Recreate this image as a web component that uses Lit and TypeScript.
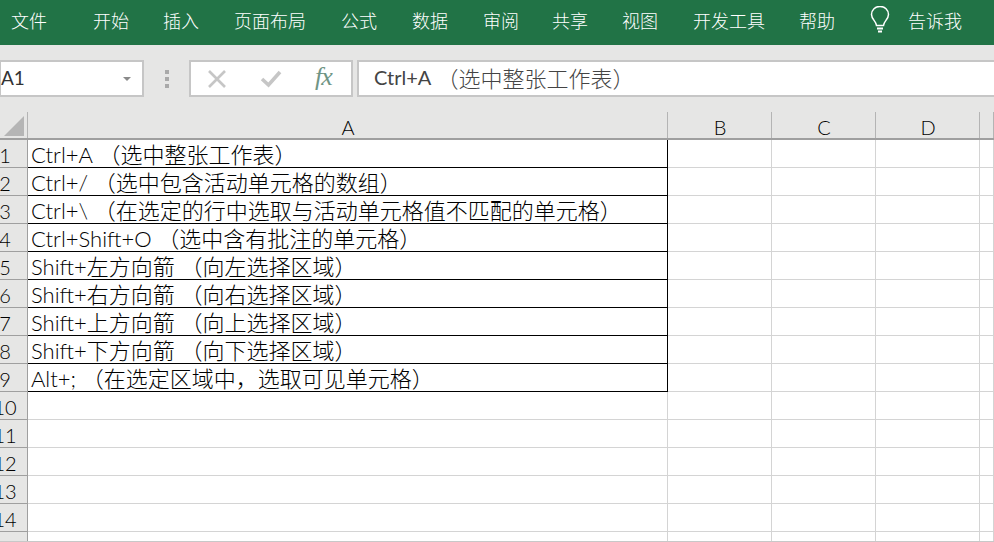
import { LitElement, html, css, svg } from "lit";
import { customElement } from "lit/decorators.js";

const MENU = ["开始", "插入", "页面布局", "公式", "数据", "审阅", "共享", "视图", "开发工具", "帮助"];
const ROWS: [string, string][] = [
  ["Ctrl+A", "（选中整张工作表）"],
  ["Ctrl+/", "（选中包含活动单元格的数组）"],
  ["Ctrl+\\", "（在选定的行中选取与活动单元格值不匹配的单元格）"],
  ["Ctrl+Shift+O", "（选中含有批注的单元格）"],
  ["Shift+左方向箭", "（向左选择区域）"],
  ["Shift+右方向箭", "（向右选择区域）"],
  ["Shift+上方向箭", "（向上选择区域）"],
  ["Shift+下方向箭", "（向下选择区域）"],
  ["Alt+;", "（在选定区域中，选取可见单元格）"],
];

@customElement("app-root")
export class AppRoot extends LitElement {
  static styles = css`
    :host {
      display: flex;
      flex-direction: column;
      width: 994px;
      height: 542px;
      overflow: hidden;
      background: #fff;
      font-family: "Lato", "Noto Sans CJK SC", sans-serif;
      text-spacing-trim: space-all;
    }
    .ribbon {
      flex: none;
      height: 45px;
      background: #217346;
      color: #fff;
      display: flex;
      align-items: center;
      font-size: 18px;
      padding-left: 11px;
      padding-bottom: 5px;
      box-sizing: border-box;
      font-family: "Noto Sans CJK SC", sans-serif;
      font-weight: 300;
    }
    .file { margin-right: 46px; }
    .menu { display: flex; gap: 35px; }
    .menu span:nth-child(1) { margin-right: -1px; }
    .menu span:nth-child(6) { margin-right: -2px; }
    .menu span:nth-child(7), .menu span:nth-child(9) { margin-right: -1px; }
    .bulb { margin-left: 35px; margin-right: 18px; display: block; }

    .fbar {
      flex: none;
      height: 67px;
      background: #e6e6e5;
      display: flex;
      align-items: flex-start;
      padding-top: 15px;
      box-sizing: border-box;
    }
    .box {
      height: 37px;
      box-sizing: border-box;
      background: #fff;
      border: 2px solid #c6c6c6;
      display: flex;
      align-items: center;
    }
    .name {
      width: 145px;
      margin-left: -1px;
      padding: 0 11px 0 0;
      justify-content: space-between;
      font-size: 19px;
      color: #333;
    }
    .name span { margin-bottom: 2px; }
    .caret {
      width: 0;
      height: 0;
      border-left: 4px solid transparent;
      border-right: 4px solid transparent;
      border-top: 4px solid #8a8a8a;
    }
    .dots {
      width: 45px;
      display: flex;
      flex-direction: column;
      align-items: center;
      gap: 3px;
      padding-top: 10px;
      box-sizing: border-box;
      height: 37px;
    }
    .dots i { width: 4px; height: 4px; background: #a9a9a9; display: block; }
    .fx { width: 164px; }
    .fx svg { display: block; }
    .x { margin-left: 16px; }
    .check { margin-left: 33px; }
    .fxt {
      margin-left: 33px;
      font-family: "Liberation Serif", serif;
      font-style: italic;
      font-size: 26px;
      color: #6f9585;
      letter-spacing: -1px;
      line-height: 1;
      margin-top: -3px;
    }
    .formula {
      flex: 1;
      margin-left: 4px;
      border-right: 0;
      padding-left: 15px;
      padding-bottom: 4px;
      font-size: 22px;
      color: #444;
      white-space: nowrap;
    }
    .formula .lat { font-size: 20px; margin-right: 5px; font-weight: 400; }
    .cell .lat { font-size: 22px; }
    .lat, .cjk { font-weight: 300; }

    .sheet {
      flex: 1;
      display: grid;
      grid-template-columns: 28px 640px 104px 104px 104px 1fr;
      grid-auto-rows: 28px;
      background: #fff;
      min-height: 0;
      overflow: hidden;
      box-sizing: border-box;
      border-bottom: 1px solid #c8c8c8;
    }
    .corner, .ch {
      background: #e6e6e5;
      box-sizing: border-box;
      border-bottom: 2px solid #9f9f9f;
      position: relative;
    }
    .corner::after, .ch::after {
      content: "";
      position: absolute;
      right: 0;
      bottom: 0;
      height: 26px;
      width: 1px;
      background: #b4b4b4;
    }
    .corner svg { position: absolute; left: 4px; top: 4px; }
    .ch {
      display: flex;
      align-items: center;
      justify-content: center;
      font-size: 20px;
      font-weight: 300;
      color: #000;
      padding-top: 3px;
    }
    .rh {
      background: #e6e6e5;
      border-right: 1px solid #9f9f9f;
      border-bottom: 1px solid #9f9f9f;
      box-sizing: border-box;
      font-size: 20px;
      font-weight: 300;
      color: #000;
      display: flex;
      align-items: center;
      justify-content: center;
      padding-right: 17px;
      padding-top: 2px;
      white-space: nowrap;
    }
    .cell {
      border-right: 1px solid #d4d4d4;
      border-bottom: 1px solid #d4d4d4;
      box-sizing: border-box;
      font-size: 22px;
      line-height: 27px;
      padding-top: 1px;
      color: #000;
      padding-left: 3px;
      white-space: nowrap;
      overflow: hidden;
    }
    .cell.b { border-right-color: #000; border-bottom-color: #000; }
  `;

  private text(lat: string, cjk: string) {
    const m = lat.match(/^([A-Za-z+]+\+)([^\x00-\x7f]+)$/);
    const latin = m
      ? html`<span class="lat">${m[1]}</span><span class="cjk">${m[2]}</span>`
      : html`<span class="lat">${lat}</span>`;
    return html`${latin} <span class="cjk">${cjk}</span>`;
  }

  render() {
    const rows = Array.from({ length: 15 }, (_, i) => i);
    return html`
      <div class="ribbon">
        <span class="file">文件</span>
        <div class="menu">${MENU.map((m) => html`<span>${m}</span>`)}</div>
        <svg class="bulb" width="20" height="28" viewBox="0 0 20 28" fill="none" stroke="#fff" stroke-width="1.5">
          <path d="M6.5 19.5 C6.5 15.5 1.5 13.5 1.5 8.5 A8.2 7.8 0 0 1 18.5 8.5 C18.5 13.5 13.5 15.5 13.5 19.5 Z" />
          <path d="M7 22.5 H13 M8 25.5 H12" stroke-width="2" />
        </svg>
        <span>告诉我</span>
      </div>
      <div class="fbar">
        <div class="box name"><span>A1</span><i class="caret"></i></div>
        <div class="dots"><i></i><i></i><i></i></div>
        <div class="box fx">
          <svg class="x" width="20" height="20" viewBox="0 0 20 20" stroke="#c6c6c6" stroke-width="2.6" fill="none"><path d="M2 2 L18 18 M18 2 L2 18" /></svg>
          <svg class="check" width="22" height="20" viewBox="0 0 22 20" stroke="#c6c6c6" stroke-width="3.6" fill="none"><path d="M2 10 L8.5 16 L20 3" /></svg>
          <span class="fxt">fx</span>
        </div>
        <div class="box formula">${this.text(ROWS[0][0], ROWS[0][1])}</div>
      </div>
      <div class="sheet">
        <div class="corner">
          <svg width="21" height="21" viewBox="0 0 21 21">${svg`<polygon points="20,0 20,20 0,20" fill="#b5b5b5" />`}</svg>
        </div>
        ${["A", "B", "C", "D", ""].map((c) => html`<div class="ch">${c}</div>`)}
        ${rows.map((i) => html`
          <div class="rh">${i + 1}</div>
          <div class="cell ${i < 9 ? "b" : ""}">${i < 9 ? this.text(ROWS[i][0], ROWS[i][1]) : ""}</div>
          <div class="cell"></div>
          <div class="cell"></div>
          <div class="cell"></div>
          <div class="cell"></div>
        `)}
      </div>
    `;
  }
}
